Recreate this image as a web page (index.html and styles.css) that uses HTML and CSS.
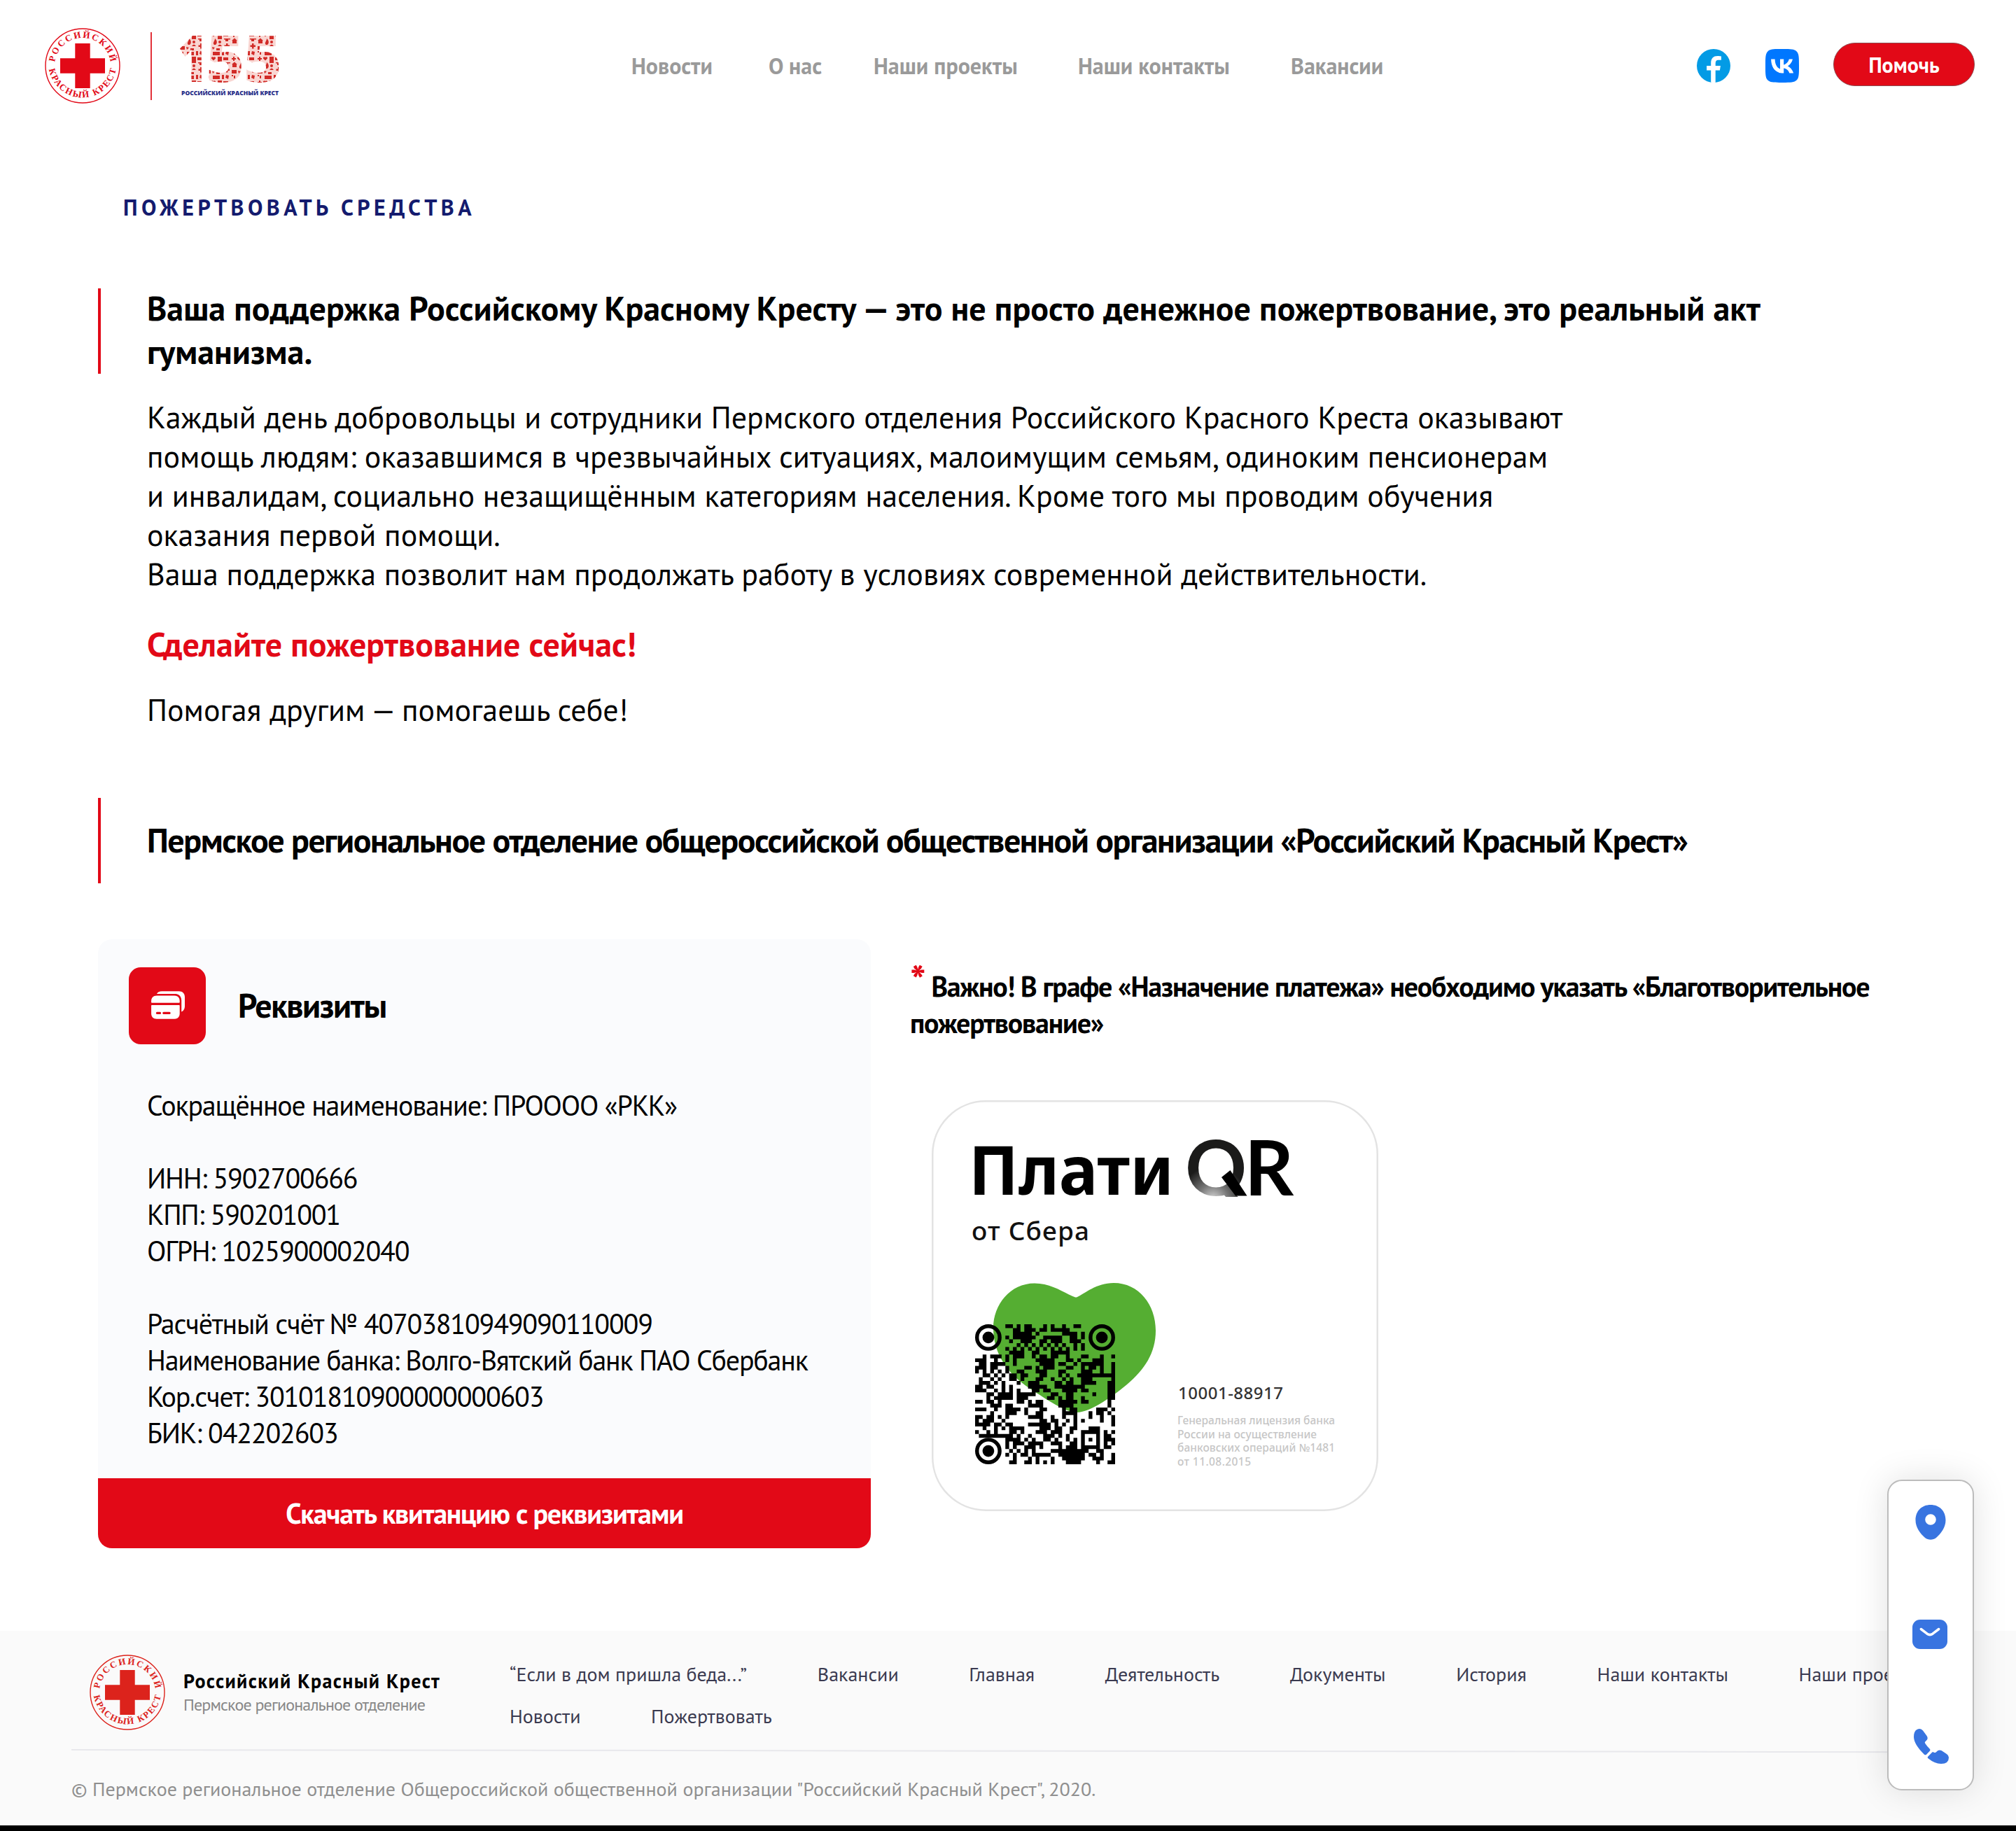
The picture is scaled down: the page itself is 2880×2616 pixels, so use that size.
FILE: index.html
```html
<!DOCTYPE html>
<html lang="ru">
<head>
<meta charset="utf-8">
<title>Пожертвовать средства — Российский Красный Крест</title>
<link rel="stylesheet" href="styles.css">
</head>
<body>
<svg class="defs" width="0" height="0">
  <symbol id="emblem" viewBox="0 0 108 108" overflow="visible">
    <circle cx="54" cy="54" r="53" fill="none" stroke="currentColor" stroke-width="1.4"/>
    <path d="M43.3 22h21.4v21.3H86v21.4H64.7V86H43.3V64.7H22V43.3h21.3z" fill="currentColor"/>
    <path id="arc-top" d="M14.9 63.5A40.2 40.2 0 1 1 93.1 63.5" fill="none"/>
    <path id="arc-bottom" d="M6.2 59.5A48.6 48.6 0 0 0 101.8 59.5" fill="none"/>
    <text class="emblem-text"><textPath href="#arc-top" startOffset="50%" text-anchor="middle" textLength="115">РОССИЙСКИЙ</textPath></text>
    <text class="emblem-text"><textPath href="#arc-bottom" startOffset="50%" text-anchor="middle" textLength="136">КРАСНЫЙ КРЕСТ</textPath></text>
  </symbol>
</svg>

<header class="header">
  <a class="brand" href="#">
    <svg class="brand-emblem" viewBox="0 0 108 108"><use href="#emblem"/></svg>
    <span class="brand-line"></span>
    <svg class="brand-155" viewBox="0 0 146 96">
      <defs>
        <pattern id="bits" width="37" height="34" patternUnits="userSpaceOnUse">
          <rect width="37" height="34" fill="#f9d6d2"/>
          <g fill="#d12b27">
            <path d="M3 1h2v2h2v2H5v2H3V5H1V3h2z"/>
            <path d="M12 6.500l-3-3a1.700 1.700 0 0 1 3-1.500 1.700 1.700 0 0 1 3 1.500z"/>
            <path d="M18 1h6v9h-6zM26 2h7v4h-7z"/>
            <path d="M1 12l4-3.500L9 12H8v4H2v-4z"/>
            <path d="M13 18c-3-3 1-5 1-9 3 2 4 7 1 9z"/>
            <circle cx="21" cy="14" r="2"/><path d="M18 20q3-5 6 0z"/>
            <path d="M27 9h9v1.500h-3v2.500h-4v-2.500h-2z"/>
            <path d="M30 16h2.500v2.500H35V21h-2.500v2.500H30V21h-2.500v-2.500H30z"/>
            <path d="M1 20h7v5H1zM10 21l4 1-3 3z"/>
            <path d="M4 28h2v4H4zM1 27h2v2H1zM11 28h10v5H11zM16 23h5v3h-5z"/>
            <path d="M24 27h3v6h-3zM30 27l4 1-1 5-4-2z"/>
          </g>
        </pattern>
      </defs>
      <text class="n155" y="71"><tspan x="-2" textLength="43" lengthAdjust="spacingAndGlyphs">1</tspan><tspan x="38.500 92">55</tspan></text>
      <text class="n155-caption" x="3" y="89.500" textLength="139" lengthAdjust="spacingAndGlyphs">РОССИЙСКИЙ КРАСНЫЙ КРЕСТ</text>
    </svg>
  </a>
  <nav class="nav">
    <a href="#">Новости</a><a href="#">О нас</a><a href="#">Наши проекты</a><a href="#">Наши контакты</a><a href="#">Вакансии</a>
  </nav>
  <div class="actions">
    <svg class="social" viewBox="0 0 48 48"><circle cx="24" cy="24" r="24" fill="#039be5"/><path d="M26.700 30.400h6.200l1-6.300h-7.200v-3.400c0-2.600.9-4.900 3.300-4.900h4.900v-5.400c-.8-.1-2.600-.4-5.300-.4-6 0-9.400 3.200-9.400 10.300v3.800h-6.100v6.300h6.100v17.300c1.200.2 2.500.3 3.700.3s1.900-.1 2.800-.2z" fill="#fff"/></svg>
    <svg class="social" viewBox="0 0 48 48"><path d="M0 23C0 12.200 0 6.700 3.400 3.400 6.700 0 12.200 0 23 0h2c10.800 0 16.300 0 19.600 3.400C48 6.700 48 12.200 48 23v2c0 10.800 0 16.300-3.400 19.600C41.300 48 35.800 48 25 48h-2c-10.800 0-16.300 0-19.600-3.400C0 41.300 0 35.800 0 25z" fill="#07f"/><path d="M25.500 34.600C14.600 34.600 8.300 27.100 8.100 14.600h5.500c.2 9.200 4.200 13 7.400 13.800V14.600h5.200v7.900c3.100-.3 6.500-3.900 7.600-7.900h5.100c-.9 4.800-4.400 8.500-7 9.900 2.600 1.200 6.600 4.300 8.200 10h-5.700c-1.200-3.800-4.200-6.700-8.200-7.100v7.100z" fill="#fff"/></svg>
    <a class="help" href="#">Помочь</a>
  </div>
</header>

<main class="main">
  <p class="eyebrow">ПОЖЕРТВОВАТЬ СРЕДСТВА</p>

  <section class="quote lead">
    <h2>Ваша поддержка Российскому Красному Кресту — это не просто денежное пожертвование, это реальный акт<br>гуманизма.</h2>
  </section>
  <div class="story">
    <p>Каждый день добровольцы и сотрудники Пермского отделения Российского Красного Креста оказывают<br>помощь людям: оказавшимся в чрезвычайных ситуациях, малоимущим семьям, одиноким пенсионерам<br>и инвалидам, социально незащищённым категориям населения. Кроме того мы проводим обучения<br>оказания первой помощи.<br>Ваша поддержка позволит нам продолжать работу в условиях современной действительности.</p>
    <h3>Сделайте пожертвование сейчас!</h3>
    <p>Помогая другим — помогаешь себе!</p>
  </div>

  <section class="quote org">
    <h2>Пермское региональное отделение общероссийской общественной организации «Российский Красный Крест»</h2>
  </section>

  <div class="columns">
    <article class="card">
      <div class="card-head">
        <span class="card-icon">
          <svg viewBox="0 0 24 24" fill="#fff"><path d="M20.5 8.700v.8c0 .3-.2.500-.5.500H1.500c-.3 0-.5-.2-.5-.5v-.8C1 6.400 2.400 5 4.700 5h12.100c2.300 0 3.700 1.400 3.700 3.700z"/><path d="M1 12v5.300C1 19.600 2.400 21 4.700 21h12.100c2.300 0 3.700-1.400 3.700-3.700V12c0-.3-.2-.5-.5-.5H1.500c-.3 0-.5.2-.5.5zm6 5.750H5c-.4 0-.75-.35-.75-.75s.35-.75.75-.75h2c.4 0 .75.350.75.750s-.35.750-.75.750zm6.500 0h-4c-.4 0-.75-.35-.75-.75s.35-.75.750-.75h4c.4 0 .75.350.75.750s-.35.750-.75.750z"/><path d="M24 6v6.100c0 2-.9 3.500-2.300 4V8.300c0-2.800-1.700-4.500-4.500-4.500H4.800C5.200 2.700 6.500 2 8.300 2H20c2.500 0 4 1.500 4 4z"/></svg>
        </span>
        <h3>Реквизиты</h3>
      </div>
      <p class="details">Сокращённое наименование: ПРОООО «РКК»<br><br>ИНН: 5902700666<br>КПП: 590201001<br>ОГРН: 1025900002040<br><br>Расчётный счёт № 40703810949090110009<br>Наименование банка: Волго-Вятский банк ПАО Сбербанк<br>Кор.счет: 30101810900000000603<br>БИК: 042202603</p>
      <a class="download" href="#">Скачать квитанцию с реквизитами</a>
    </article>

    <aside class="aside">
      <p class="important"><sup>*</sup> Важно! В графе «Назначение платежа» необходимо указать «Благотворительное<br>пожертвование»</p>
      <svg class="sticker" viewBox="0 0 638 587">
        <defs>
          <radialGradient id="fade" gradientUnits="userSpaceOnUse" cx="402" cy="142" r="48">
            <stop offset="0" stop-color="#d8d8d8"/><stop offset=".45" stop-color="#777"/><stop offset="1" stop-color="#1b1b1a"/>
          </radialGradient>
          <clipPath id="baseline"><rect x="355" y="40" width="100" height="98"/></clipPath>
        </defs>
        <rect x="1.250" y="1.250" width="635.500" height="584.500" rx="76" fill="#fff" stroke="#e3e3e3" stroke-width="2.500"/>
        <text class="pay" x="53" y="135" textLength="293" lengthAdjust="spacingAndGlyphs">Плати</text>
        <text class="q" x="362" y="136" fill="url(#fade)" clip-path="url(#baseline)">Q</text>
        <path d="M414 110L426.500 100L450.500 136.500H434z"/>
        <text class="q" x="447" y="136">R</text>
        <text class="sber" x="57" y="200" textLength="168">от Сбера</text>
        <path d="M204 281C190 276 172 261.500 147 261.500C112 261.500 88 292 88 325C88 362 108 390 139 411C168 430 190 445 207 446C228 446 262 420 279 406C304 385 320 361 320 329C320 292 296 261 260 261C235 261 219 276 208 281Q206 282 204 281Z" fill="#55ae32"/>
        <g transform="translate(62 320) scale(5.405)">
          <path id="modules"/>
          <g fill="none" stroke="#000">
            <circle cx="3.500" cy="3.500" r="3"/><circle cx="33.500" cy="3.500" r="3"/><circle cx="3.500" cy="33.500" r="3"/>
          </g>
          <circle cx="3.500" cy="3.500" r="1.550"/><circle cx="33.500" cy="3.500" r="1.550"/><circle cx="3.500" cy="33.500" r="1.550"/>
        </g>
        <text class="code" x="352" y="427" textLength="150">10001-88917</text>
        <g class="license">
          <text x="351" y="463" textLength="225">Генеральная лицензия банка</text>
          <text x="351" y="482.500" textLength="199">России на осуществление</text>
          <text x="351" y="502" textLength="225">банковских операций №1481</text>
          <text x="351" y="521.500" textLength="105">от 11.08.2015</text>
        </g>
      </svg>
    </aside>
  </div>
</main>

<footer class="footer">
  <div class="footer-top">
    <svg class="footer-emblem" viewBox="0 0 108 108"><use href="#emblem"/></svg>
    <div class="footer-brand"><b>Российский Красный Крест</b><span>Пермское региональное отделение</span></div>
    <nav class="footer-nav">
      <div><a href="#">“Если в дом пришла беда...”</a><a href="#">Вакансии</a><a href="#">Главная</a><a href="#">Деятельность</a><a href="#">Документы</a><a href="#">История</a><a href="#">Наши контакты</a><a href="#">Наши проекты</a></div>
      <div><a href="#">Новости</a><a href="#">Пожертвовать</a></div>
    </nav>
  </div>
  <svg class="footer-rule" viewBox="0 0 2676 6" preserveAspectRatio="none"><path d="M0 1L2676 4.200" stroke="#e8e8ec" stroke-width="2"/></svg>
  <p class="copyright">© Пермское региональное отделение Общероссийской общественной организации "Российский Красный Крест", 2020.</p>
</footer>

<div class="contacts">
  <svg class="c-pin" viewBox="0 0 44 50"><path fill-rule="evenodd" d="M22 0C34.500 0 43.500 8.500 43.500 22C43.500 32 37 41 30 47C25.500 50.600 18.500 50.600 14 47C7 41 .5 32 .5 22C.5 8.500 9.500 0 22 0ZM22 13.200a7.800 7.800 0 1 0 0 15.600 7.800 7.800 0 0 0 0-15.600Z" fill="#3874e0"/></svg>
  <svg class="c-mail" viewBox="0 0 50 42"><rect width="50" height="42" rx="11" fill="#3874e0"/><path d="M12.300 13.500L21 20.200Q25 23 29 20.200L37.700 13.500" fill="none" stroke="#fff" stroke-width="3.500" stroke-linecap="round"/></svg>
  <svg class="c-phone" viewBox="0 0 50 50" fill="#3874e0"><path d="M8.500 0Q11 0 13 2.500L18.500 10Q20.500 13 19 15.500L15.800 19Q15.600 20 16.500 21.200Q19 25 23 29Q24 30.300 23 31.500L18 36.700Q16.500 38 15 36.700Q0 22 0 11.500Q0 3.500 4.500 1Q6.500 0 8.500 0Z"/><path d="M20.200 39.700L26.300 33.400Q27.300 32.500 28.300 33.500Q30 34.600 31.300 33.700L34.500 31Q36.800 29.800 39.500 31L47 36Q50 38 50 41Q50 50 39 50Q30 50 20.200 42Q19 40.900 20.200 39.700Z"/></svg>
</div>
<script src="qr.js"></script>
</body>
</html>
```
FILE: styles.css
```css
* { box-sizing: border-box; }
body { margin: 0; background: #fff; color: #000; font-family: "PT Sans", "Noto Sans", sans-serif; position: relative; width: 2880px; height: 2616px; overflow: hidden; }
a { color: inherit; text-decoration: none; }
p, h2, h3 { margin: 0; white-space: nowrap; }
svg { display: block; flex: none; }
.defs { position: absolute; }
.emblem-text { font: bold 13px "Liberation Serif", serif; fill: currentColor; }
.brand-emblem, .brand-155, .footer-emblem { overflow: visible; }

.header { height: 188px; display: flex; align-items: center; padding-left: 64px; }
.brand { display: flex; align-items: center; width: 838px; color: #e20917; }
.brand-emblem { width: 108px; height: 108px; }
.brand-line { width: 2px; height: 97px; background: #e2323a; margin: 0 39px 0 43px; }
.brand-155 { width: 146px; height: 96px; }
.n155 { font: 900 93px "Open Sans", sans-serif; fill: url(#bits); }
.n155-caption { font: 800 9.5px "Open Sans", sans-serif; fill: #232a86; }
.nav { display: grid; grid-template-columns: 196px 150px 292px 304px auto; width: 1522px; font-weight: 700; font-size: 32px; color: #9a9a9a; white-space: nowrap; }
.actions { display: flex; align-items: center; }
.social { width: 48px; height: 48px; margin-right: 50px; }
.help { width: 202px; height: 62px; margin: 0 0 4px -1px; border: 1px solid #8d4a4f; border-radius: 31px; background: #e20917; color: #fff; font-weight: 700; font-size: 30px; line-height: 62px; text-align: center; }

.main { height: 2142px; padding: 88px 0 0 140px; }
.eyebrow { padding-left: 36px; font-weight: 700; font-size: 32px; line-height: 40px; letter-spacing: 5.45px; color: #141b6e; }
.quote { display: flex; align-items: center; height: 122px; border-left: 4px solid #e20917; padding-left: 66px; }
.quote h2 { font-size: 48px; line-height: 62px; }
.lead { margin-top: 96px; }
.lead h2 { margin-top: -4px; }
.story { padding: 34px 0 0 70px; font-size: 44px; line-height: 56px; }
.story h3 { margin: 41px 0 35px; font-size: 48px; line-height: 62px; color: #e20917; }
.org { margin-top: 98px; }
.org h2 { margin-top: -2px; letter-spacing: -.03em; }

.columns { display: flex; gap: 56px; margin-top: 80px; }
.card { width: 1104px; height: 870px; border-radius: 20px; background: #fafbfd; overflow: hidden; display: flex; flex-direction: column; }
.card-head { display: flex; align-items: center; gap: 46px; padding: 40px 44px 0; }
.card-icon { width: 110px; height: 110px; border-radius: 17px; background: #e20917; display: flex; align-items: center; justify-content: center; }
.card-icon svg { width: 50px; height: 50px; }
.card-head h3 { margin-top: -2px; font-size: 48px; letter-spacing: -.03em; }
.details { padding: 61px 0 0 70px; font-size: 40px; line-height: 52px; letter-spacing: -.03em; }
.download { margin-top: auto; height: 100px; background: #e20917; color: #fff; font-weight: 700; font-size: 40px; line-height: 100px; letter-spacing: -.03em; text-align: center; }
.important { margin-top: 41px; font-weight: 700; font-size: 40px; line-height: 52px; letter-spacing: -.03em; }
.important sup { color: #e20917; font-size: 60px; line-height: 0; vertical-align: 1px; }
.sticker { width: 638px; height: 587px; margin: 85px 0 0 31px; }
.pay { font: 700 97px "Noto Sans", sans-serif; }
.q { font: 700 109px "Lato", sans-serif; }
.sber { font: 500 37px "Noto Sans", sans-serif; fill: #111; }
.code { font: 500 24px "Noto Sans", sans-serif; fill: #333; }
.license { font: 500 15.500px "Noto Sans", sans-serif; fill: #c6c6c6; }

.footer { height: 286px; background: #fafafa; border-bottom: 8px solid #000; padding: 34px 0 0 102px; white-space: nowrap; overflow: hidden; }
.footer-top { display: flex; height: 135px; padding-left: 26px; }
.footer-emblem { width: 108px; height: 108px; color: #dc231c; }
.footer-brand { display: flex; flex-direction: column; width: 492px; padding: 22px 0 0 26px; }
.footer-brand b { font-size: 28px; line-height: 32px; letter-spacing: 1.4px; }
.footer-brand span { font-size: 24px; line-height: 35px; letter-spacing: -.84px; color: #888; }
.footer-nav { font-size: 28px; color: #3a3a50; }
.footer-nav div { display: flex; gap: 100.7px; line-height: 60px; margin-top: -2px; }
.footer-nav div + div { margin-top: 0; }
.footer-rule { width: 2676px; height: 6px; }
.copyright { margin-top: 31px; font-size: 28px; line-height: 40px; color: #8f8f8f; }

.contacts { position: absolute; left: 2696px; top: 2114px; width: 124px; height: 444px; border: 2px solid #bcbcbc; border-radius: 21px; background: #fff; box-shadow: 0 0 50px rgba(0, 0, 0, .12); display: flex; flex-direction: column; align-items: center; justify-content: space-between; padding: 34px 0 36px; }
.c-pin { width: 44px; height: 50px; }
.c-mail { width: 50px; height: 42px; margin-right: 2px; }
.c-phone { width: 50px; height: 50px; margin-left: 2px; }
```
FILE: qr.js
```js
// Dark modules of the payment code, listed by row as column numbers or ranges.
const rows = [
  '8-9 11 13-14 18 20 23 26-27', '10-11 13-15 17-18 20-24', '10-14 16 23-26 28', '8 10-15 18-22 25-26 28',
  '9 12-14 17-18 20-22 25-27', '11 13 15 17 19 21 23 26 28', '8 10 12 14 16 18 20 22 24 26 28', '9-12 15-16 20-24',
  '2 4-6 8 10-12 15 17-18 20-21 24 28-29 33 36', '0-2 5 8 10 16-20 24-25 27 31-33', '1-2 4-7 10 17-20 22-23 26 28-33 36',
  '0-2 4-5 8 13-14 16 18-20 24-25 28 30-31 33 36', '0 2 4 6 8 11-12 16-18 22-23 28-30 33 36', '2-3 5 7 9-10 12-13 17-18 22 24 27-36',
  '1 4 6 9-10 12 16-17 20 23 25 28-30 36', '1-3 5 7 11 14-16 21-22 24-25 28-31 35-36', '0-1 3-4 7 9 14-18 21-28 35-36',
  '0-2 5 7 9 11 15-16 18-19 23-26 28-29 35-36', '3-4 6-9 11-15 20-21 24-25 31 35-36', '3 5-9 11-13 19-20 22 24-25 28 35-36',
  '0-1 3-4 6 11-12 14 16-17 22-26 28-29 35', '4-6 8-9 14-17 22-25 35', '0-2 5 8-11 13 17-18 23 25-26 32-34 36', '4 8-10 13 16-17 23-26 30 32-33 35',
  '0-1 3-4 6 8 14-17 20 23 26 30 33 36', '0 2-4 7 17-18 20-21 24 26 28 33 36', '0-3 5-6 8-9 14-19 21 23 26 36', '2 5 7 9-12 17-19 21-22 25-26 30-32',
  '0 3 5 9-10 12 16-18 20-22 25 34 36', '1-9 11 14 18-20 22 24 34-35',
  '8-11 13 15 18-19 21 24 26 34-36', '8 10-12 14-17 20-22 25-26 34 36', '8 10 13-15 17 22 24-26 34-35', '9 11 13 15 20-29 32-33',
  '8 10 12-13 15-19 22-28 30-31 33 36', '10 14 16 20 23-28 31-33 36', '9-10 13-14 16 18 20 24-27 32 35-36',
];
let d = '';
rows.forEach((row, y) => row.split(' ').forEach(run => {
  const [a, b = a] = run.split('-').map(Number);
  d += `M${a} ${y}h${b - a + 1}v1h-${b - a + 1}z`;
}));
// Alignment square in the lower right corner.
d += 'M28 28h5v1h-5zM28 32h5v1h-5zM28 29h1v3h-1zM32 29h1v3h-1zM30 30h1v1h-1z';
document.getElementById('modules').setAttribute('d', d);
```
